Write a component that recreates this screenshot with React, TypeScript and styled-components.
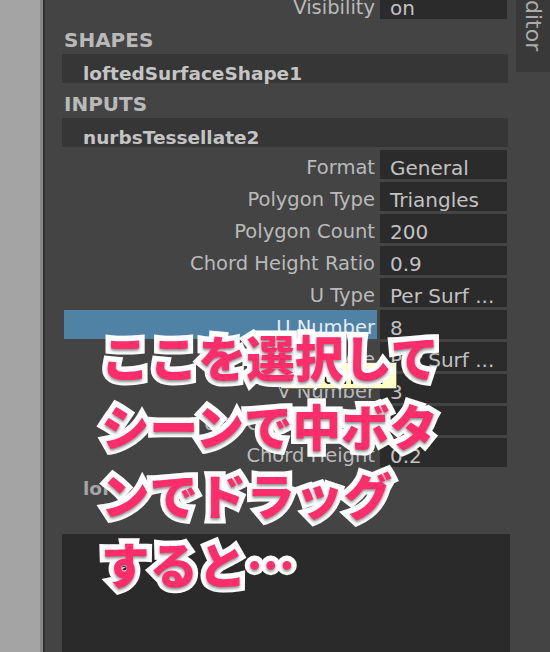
import React from "react";
import styled, { createGlobalStyle } from "styled-components";

const GlobalStyle = createGlobalStyle`
  html, body {
    margin: 0;
    padding: 0;
    background: #444;
    overflow: hidden;
  }
  body {
    font-family: "DejaVu Sans", "Liberation Sans", sans-serif;
  }
`;

const Screen = styled.div`
  position: relative;
  display: flex;
  width: 550px;
  height: 652px;
  overflow: hidden;
  background: #444444;
`;

const Gutter = styled.div`
  flex: none;
  width: 40px;
  background: #a4a4a4;
  border-right: 3px solid #878787;
`;

const Divider = styled.div`
  flex: none;
  width: 2px;
  background: #303030;
`;

const Editor = styled.div`
  flex: 1;
  display: flex;
  flex-direction: column;
  padding: 0 8px 0 17px;
  min-width: 0;
`;

const AttrList = styled.div<{ $top?: number; $lift?: number }>`
  display: flex;
  flex-direction: column;
  gap: 3px;
  padding-top: ${(p) => p.$top ?? 0}px;
  margin-top: ${(p) => -(p.$lift ?? 0)}px;
`;

const AttrRow = styled.div`
  display: flex;
  gap: 3px;
  height: 29px;
  margin-left: 2px;
`;

const Label = styled.div<{ $selected?: boolean }>`
  width: 313px;
  box-sizing: border-box;
  padding: 8px 2px 0 0;
  text-align: right;
  font-size: 19.5px;
  line-height: 20px;
  white-space: nowrap;
  color: ${(p) => (p.$selected ? "#e4ecf2" : "#bababa")};
  background: ${(p) => (p.$selected ? "#4f82a5" : "transparent")};
`;

const Value = styled.div`
  width: 127px;
  box-sizing: border-box;
  padding: 8px 0 0 10px;
  background: #2b2b2b;
  color: #c2c2c2;
  font-size: 20px;
  line-height: 20px;
  white-space: nowrap;
  overflow: hidden;
`;

const Heading = styled.div`
  height: 35px;
  box-sizing: border-box;
  padding: 11px 0 0 2px;
  font-size: 20px;
  line-height: 20px;
  font-weight: bold;
  color: #b9b9b9;
`;

const NodeBar = styled.div`
  height: 29px;
  box-sizing: border-box;
  padding: 10px 0 0 21px;
  background: #363636;
  font-size: 18.5px;
  line-height: 20px;
  font-weight: bold;
  color: #c4c4c4;
`;

const SubLabel = styled.div`
  height: 67px;
  box-sizing: border-box;
  padding: 12px 0 0 21px;
  font-size: 18.5px;
  line-height: 20px;
  font-weight: bold;
  color: #a4a4a4;
`;

const NotesBox = styled.div`
  flex: 1;
  margin-right: -2px;
  background: #2a2a2a;
`;

const Tab = styled.div`
  flex: none;
  width: 34px;
  height: 72px;
  box-sizing: border-box;
  padding-bottom: 21px;
  display: flex;
  flex-direction: column;
  align-items: center;
  justify-content: flex-end;
  overflow: hidden;
  background: #393939;
`;

const TabText = styled.span`
  writing-mode: vertical-rl;
  white-space: nowrap;
  font-size: 22px;
  line-height: 22px;
  color: #ababab;
`;

const Tooltip = styled.div`
  position: absolute;
  left: 280px;
  top: 362px;
  width: 117px;
  height: 27px;
  box-sizing: border-box;
  padding: 5px 0 0 7px;
  background: #ffffc6;
  border: 1px solid #6f6f5c;
  color: #111;
  font-size: 19.5px;
  line-height: 20px;
  white-space: nowrap;
`;

const Caption = styled.div`
  position: absolute;
  left: 101px;
  top: 322px;
  font-family: "Noto Sans CJK JP", "Noto Sans CJK SC", sans-serif;
  font-weight: 900;
  font-size: 48.5px;
  line-height: 69px;
  color: #fd2d6c;
  -webkit-text-stroke: 11px #ffffff;
  paint-order: stroke fill;
  text-shadow: 0 2px 3px rgba(0, 0, 0, 0.45);
  white-space: nowrap;
`;

interface Attr {
  label: string;
  value: string;
  selected?: boolean;
}

const inputs: Attr[] = [
  { label: "Format", value: "General" },
  { label: "Polygon Type", value: "Triangles" },
  { label: "Polygon Count", value: "200" },
  { label: "Chord Height Ratio", value: "0.9" },
  { label: "U Type", value: "Per Surf ..." },
  { label: "U Number", value: "8", selected: true },
  { label: "V Type", value: "Per Surf ..." },
  { label: "V Number", value: "3" },
  { label: "Use Chord Height", value: "" },
  { label: "Chord Height", value: "0.2" },
];

export default function App() {
  return (
    <>
      <GlobalStyle />
      <Screen>
        <Gutter />
        <Divider />
        <Editor>
          <AttrList $lift={10}>
            <AttrRow>
              <Label>Visibility</Label>
              <Value>on</Value>
            </AttrRow>
          </AttrList>
          <Heading>SHAPES</Heading>
          <NodeBar>loftedSurfaceShape1</NodeBar>
          <Heading>INPUTS</Heading>
          <NodeBar>nurbsTessellate2</NodeBar>
          <AttrList $top={3}>
            {inputs.map((item, i) => (
              <AttrRow key={i}>
                <Label $selected={item.selected}>{item.label}</Label>
                <Value>{item.value}</Value>
              </AttrRow>
            ))}
          </AttrList>
          <SubLabel>loft1</SubLabel>
          <NotesBox />
        </Editor>
        <Tab>
          <TabText>Attribute Editor</TabText>
        </Tab>
        <Tooltip>U Number</Tooltip>
        <Caption>
          ここを選択して
          <br />
          シーンで中ボタ
          <br />
          ンでドラッグ
          <br />
          すると…
        </Caption>
      </Screen>
    </>
  );
}
